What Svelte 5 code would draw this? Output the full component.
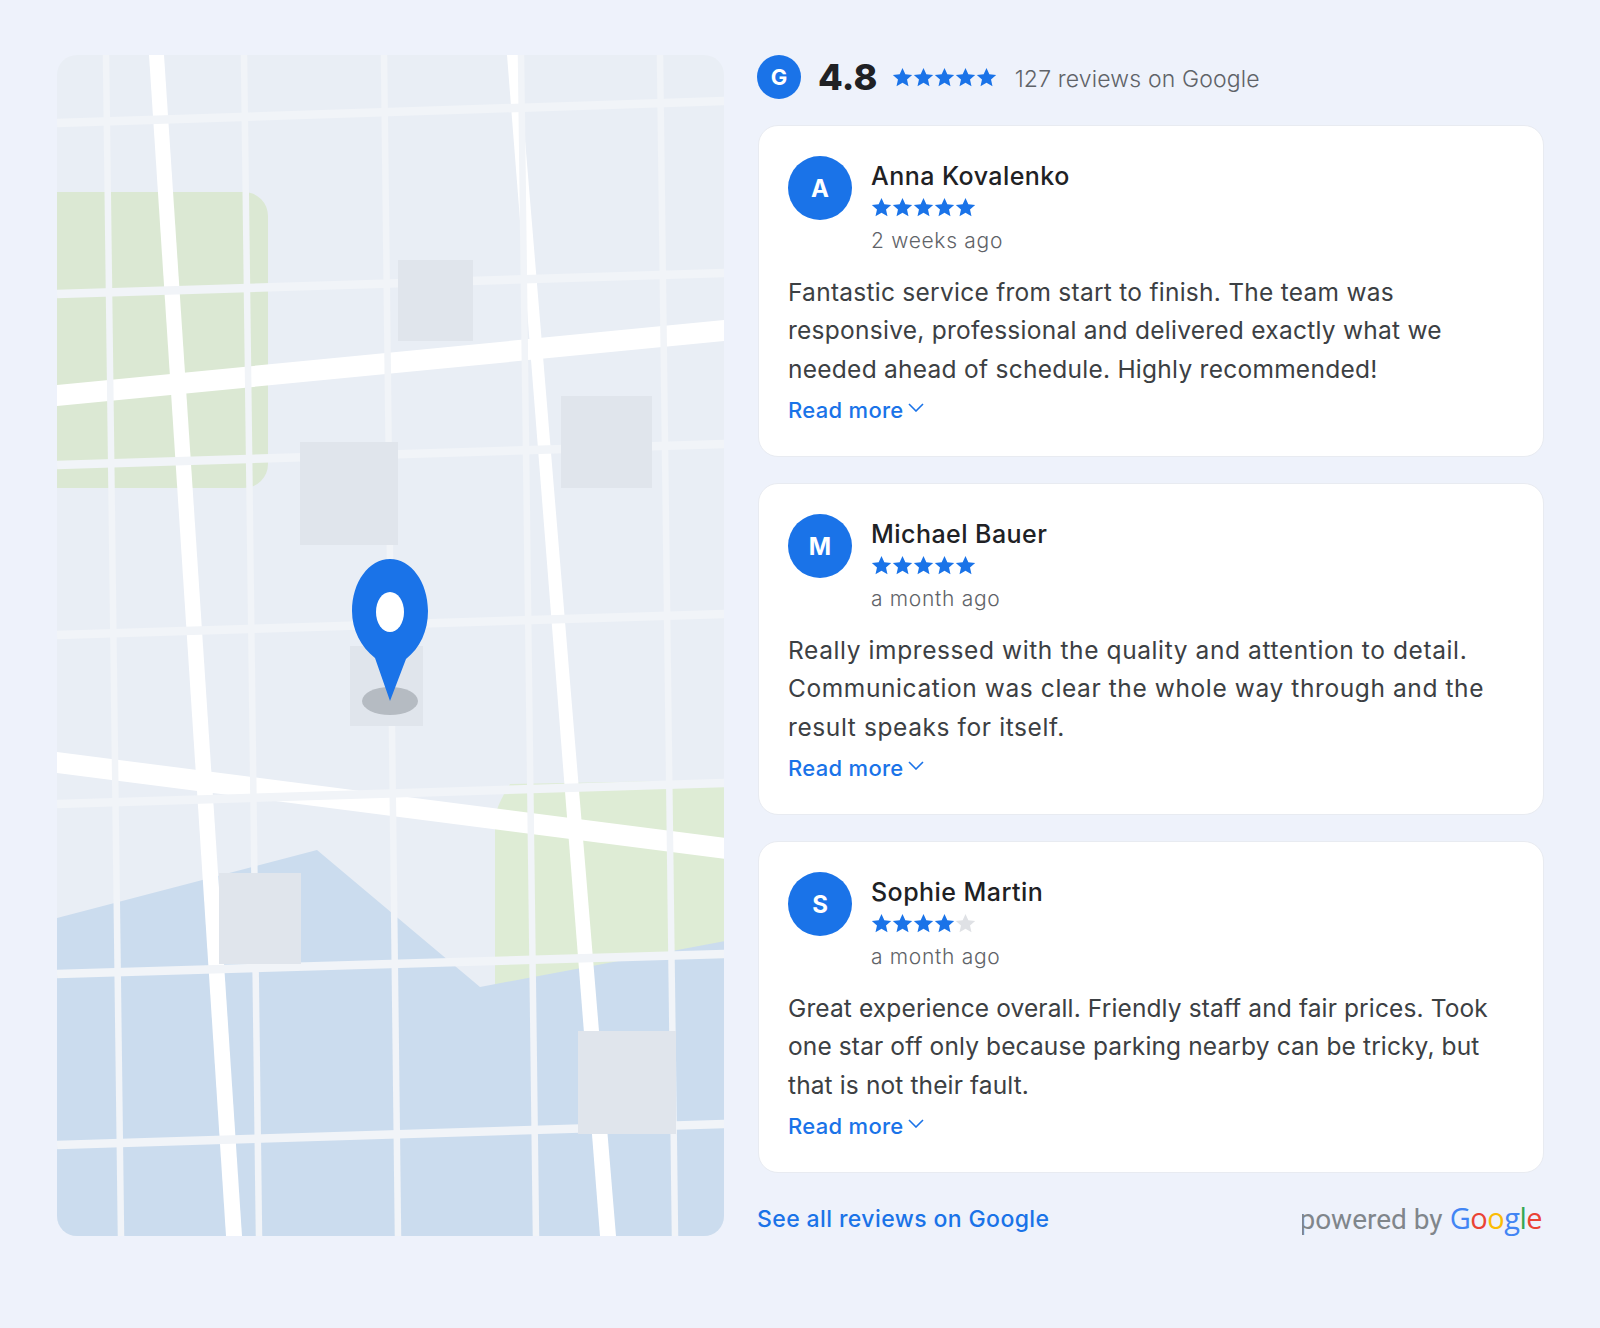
<script>
  // tracking: per-card letter spacing for the body copy, keeps line ends where they belong
  const reviews = [
    {
      initial: "A",
      name: "Anna Kovalenko",
      rating: 5,
      time: "2 weeks ago",
      tracking: 0.26,
      lines: [
        "Fantastic service from start to finish. The team was",
        "responsive, professional and delivered exactly what we",
        "needed ahead of schedule. Highly recommended!",
      ],
    },
    {
      initial: "M",
      name: "Michael Bauer",
      rating: 5,
      time: "a month ago",
      tracking: 0.6,
      lines: [
        "Really impressed with the quality and attention to detail.",
        "Communication was clear the whole way through and the",
        "result speaks for itself.",
      ],
    },
    {
      initial: "S",
      name: "Sophie Martin",
      rating: 4,
      time: "a month ago",
      tracking: 0.12,
      lines: [
        "Great experience overall. Friendly staff and fair prices. Took",
        "one star off only because parking nearby can be tricky, but",
        "that is not their fault.",
      ],
    },
  ];

  const thinRoads = [
    [106, 55, 121, 1236],
    [244, 55, 259, 1236],
    [384, 55, 398, 1236],
    [521, 55, 536, 1236],
    [660, 55, 675, 1236],
    [57, 123, 725, 101],
    [57, 294, 725, 273],
    [57, 465, 725, 444],
    [57, 635, 725, 614],
    [57, 804, 725, 783],
    [57, 974, 725, 954],
    [57, 1145, 725, 1124],
  ];

  const buildings = [
    [398, 260, 75, 81],
    [561, 396, 91, 92],
    [300, 442, 98, 103],
    [350, 646, 73, 80],
    [219, 873, 82, 91],
    [578, 1031, 98, 103],
  ];

  const starPath = "M10 1l2.7 6 6.5.7-4.9 4.3 1.4 6.4L10 15.1l-5.7 3.3 1.4-6.4L.8 7.7l6.5-.7z";
</script>

{#snippet stars(count)}
  <span class="stars">
    {#each [1, 2, 3, 4, 5] as n}
      <svg viewBox="0 0 20 20" class:off={n > count}><path d={starPath} /></svg>
    {/each}
  </span>
{/snippet}

<div class="page">
  <div class="map">
    <svg viewBox="57 55 667 1181" width="667" height="1181">
      <rect x="57" y="55" width="668" height="1181" fill="#e9eef5" />
      <path d="M40 192H244a24 24 0 0 1 24 24V464a24 24 0 0 1-24 24H40z" fill="#dbe8d3" />
      <path d="M495 1000V820q0-12 15-36L725 780V1000z" fill="#deecd5" />
      <path d="M57 918L317 850L480 987L725 941V1236H57z" fill="#cbdcee" />

      <path d="M149 55H164L242 1236H226z" fill="#fff" />
      <path d="M507 55H518L616 1236H600z" fill="#fff" />
      <path d="M57 385L725 320V341L57 406z" fill="#fff" />
      <path d="M57 752L725 838V859L57 773z" fill="#fff" />

      {#each thinRoads as r}
        <line x1={r[0]} y1={r[1]} x2={r[2]} y2={r[3]} stroke="#f1f4f8" stroke-width={r[1] === 55 ? 6.5 : 8.5} />
      {/each}

      {#each buildings as b}
        <rect x={b[0]} y={b[1]} width={b[2]} height={b[3]} fill="#e0e5ec" />
      {/each}

      <ellipse cx="390" cy="701" rx="28" ry="14" fill="#b5bbc2" />
      <path d="M390 559c21 0 38 23 38 52 0 20-8 37-22 48l-16 42-15-43c-14-11-23-28-23-47 0-29 17-52 38-52z" fill="#1a73e8" />
      <ellipse cx="390" cy="612" rx="14" ry="20" fill="#fff" />
    </svg>
  </div>

  <div class="side">
    <header class="summary">
      <span class="g-badge">G</span>
      <span class="score">4.8</span>
      {@render stars(5)}
      <span class="count">127 reviews on Google</span>
    </header>

    {#each reviews as review}
      <article class="card">
        <div class="head">
          <span class="avatar">{review.initial}</span>
          <div class="meta">
            <div class="name">{review.name}</div>
            {@render stars(review.rating)}
            <div class="time">{review.time}</div>
          </div>
        </div>
        <p class="body" style:letter-spacing="{review.tracking}px">
          {#each review.lines as line}
            <span>{line}</span>
          {/each}
        </p>
        <a class="more" href="#more">
          Read more
          <svg viewBox="0 0 16 9" width="16" height="9"><path d="M1 1l7 7 7-7" /></svg>
        </a>
      </article>
    {/each}

    <footer class="foot">
      <a class="all" href="#all">See all reviews on Google</a>
      <div class="powered">
        <span class="by">powered by</span>
        <span class="logo"><b class="bl">G</b><b class="rd">o</b><b class="yl">o</b><b class="bl">g</b><b class="gr">l</b><b class="rd">e</b></span>
      </div>
    </footer>
  </div>
</div>

<style>
  :global(body) {
    margin: 0;
    background: #eef2fb;
  }

  .page {
    display: flex;
    gap: 33px;
    height: 1328px;
    box-sizing: border-box;
    padding: 55px 56px 0 57px;
    font-family: Inter, "Liberation Sans", sans-serif;
    color: #202124;
  }

  .map {
    width: 667px;
    height: 1181px;
    flex: none;
    border-radius: 20px;
    overflow: hidden;
  }
  .map svg {
    display: block;
  }

  .side {
    width: 787px;
    flex: none;
  }

  .summary {
    display: flex;
    align-items: center;
    height: 44px;
    margin-bottom: 26px;
  }
  .g-badge {
    width: 44px;
    height: 44px;
    border-radius: 50%;
    background: #1a73e8;
    color: #fff;
    font-weight: 700;
    font-size: 22px;
    display: flex;
    align-items: center;
    justify-content: center;
    flex: none;
  }
  .score {
    margin-left: 17px;
    font-size: 36px;
    font-weight: 800;
    letter-spacing: 0.2px;
  }
  .summary .stars {
    margin-left: 14px;
  }
  .count {
    margin-left: 18px;
    padding-top: 4px;
    font-size: 23px;
    font-weight: 300;
    letter-spacing: 0.15px;
    color: #5f6368;
  }

  .stars {
    display: flex;
  }
  .stars svg {
    width: 21px;
    height: 21px;
    display: block;
  }
  .stars path {
    fill: #1a73e8;
  }
  .stars svg.off path {
    fill: #dfe1e5;
  }

  .card {
    height: 332px;
    box-sizing: border-box;
    margin: 0 0 26px 1px;
    padding: 28px 29px;
    background: #fff;
    border: 1px solid #e8ebf1;
    border-radius: 20px;
  }
  .head {
    display: flex;
    gap: 19px;
  }
  .avatar {
    width: 64px;
    height: 64px;
    margin-top: 2px;
    border-radius: 50%;
    background: #1a73e8;
    color: #fff;
    font-weight: 700;
    font-size: 24px;
    display: flex;
    align-items: center;
    justify-content: center;
    flex: none;
  }
  .name {
    font-size: 25px;
    font-weight: 550;
    line-height: 42px;
    letter-spacing: 0.45px;
    margin-top: 1px;
  }
  .time {
    font-size: 21px;
    line-height: 26px;
    margin-top: 10px;
    font-weight: 300;
    letter-spacing: 0.7px;
    color: #5f6368;
  }
  .body {
    margin: 19px 0 0;
    font-size: 24.5px;
    line-height: 38.3px;
    font-weight: 400;
    color: #3c4043;
  }
  .body span {
    display: block;
    white-space: nowrap;
  }
  .more {
    display: inline-flex;
    align-items: flex-start;
    gap: 4px;
    margin-top: 7px;
    font-size: 22px;
    line-height: 30px;
    font-weight: 550;
    letter-spacing: 0.3px;
    color: #1a73e8;
    text-decoration: none;
  }
  .more svg {
    margin-top: 8px;
    fill: none;
    stroke: #1a73e8;
    stroke-width: 1.6;
  }

  .foot {
    display: flex;
    align-items: center;
    justify-content: space-between;
    height: 46px;
    margin-top: -3px;
    margin-right: 2px;
  }
  .all {
    font-size: 23px;
    font-weight: 550;
    letter-spacing: 0.4px;
    color: #1a73e8;
    text-decoration: none;
  }
  /* the p of "powered" is cut by this box in the design too */
  .powered {
    width: 240px;
    display: flex;
    justify-content: flex-end;
    align-items: baseline;
    gap: 7px;
    margin-top: -4px;
    overflow: hidden;
    white-space: nowrap;
    font-family: Roboto, "Liberation Sans", sans-serif;
    flex: none;
  }
  .by {
    font-size: 28px;
    color: #80868b;
  }
  .logo {
    font-family: "Open Sans", "Liberation Sans", sans-serif;
    font-size: 29px;
    letter-spacing: -0.5px;
  }
  .logo b {
    font-weight: 500;
  }
  .bl { color: #4285f4; }
  .rd { color: #ea4335; }
  .yl { color: #fbbc05; }
  .gr { color: #34a853; }
</style>
